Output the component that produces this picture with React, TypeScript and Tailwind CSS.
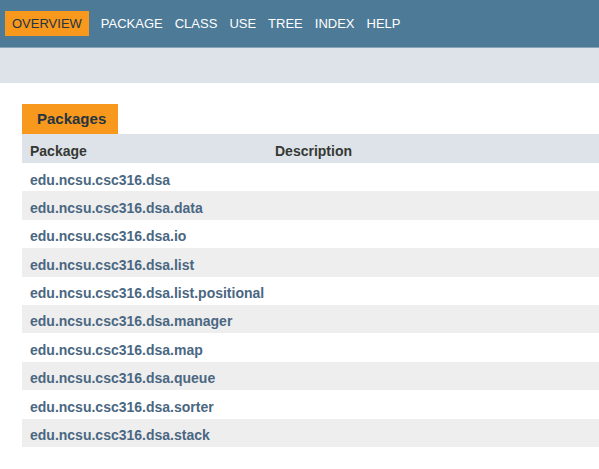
import React from "react";

const packages = [
  "edu.ncsu.csc316.dsa",
  "edu.ncsu.csc316.dsa.data",
  "edu.ncsu.csc316.dsa.io",
  "edu.ncsu.csc316.dsa.list",
  "edu.ncsu.csc316.dsa.list.positional",
  "edu.ncsu.csc316.dsa.manager",
  "edu.ncsu.csc316.dsa.map",
  "edu.ncsu.csc316.dsa.queue",
  "edu.ncsu.csc316.dsa.sorter",
  "edu.ncsu.csc316.dsa.stack",
];

const navItems = ["PACKAGE", "CLASS", "USE", "TREE", "INDEX", "HELP"];

export default function App() {
  return (
    <div
      className="w-[599px] h-[469px] overflow-hidden bg-white"
      style={{ fontFamily: '"Liberation Sans", Arial, sans-serif' }}
    >
      <div className="h-[48px] bg-[#4d7a97] border-b border-[#8aa4ba] flex items-start pt-[11px] pl-[5px] gap-[12px]">
        <div className="h-[25px] px-[7px] bg-[#f8981d] text-[#253441] text-[13px] flex items-center">
          OVERVIEW
        </div>
        {navItems.map((n) => (
          <div key={n} className="h-[25px] text-white text-[13px] flex items-center">
            {n}
          </div>
        ))}
      </div>
      <div className="h-[35px] bg-[#dee3e9]" />
      <div className="pt-[21px] pl-[22px]">
        <div className="w-[96px] h-[30px] bg-[#f8981d] text-[#253441] text-[15px] font-bold flex items-center pl-[15px]">
          Packages
        </div>
        <div className="w-[640px]">
          <div className="flex h-[29px] bg-[#dee3e9] pt-[9px] leading-[16px] text-[14px] font-bold text-[#353833]">
            <div className="w-[245px] pl-[8px]">Package</div>
            <div className="pl-[8px]">Description</div>
          </div>
          {packages.map((p, i) => (
            <div
              key={p}
              className={
                "flex h-[28.4px] pt-[8.5px] leading-[16px] text-[14px] font-bold text-[#4a6782] " +
                (i % 2 === 0 ? "bg-white" : "bg-[#eeeeee]")
              }
            >
              <div className="w-[245px] pl-[8px] whitespace-nowrap">{p}</div>
              <div className="pl-[8px]" />
            </div>
          ))}
        </div>
      </div>
    </div>
  );
}
